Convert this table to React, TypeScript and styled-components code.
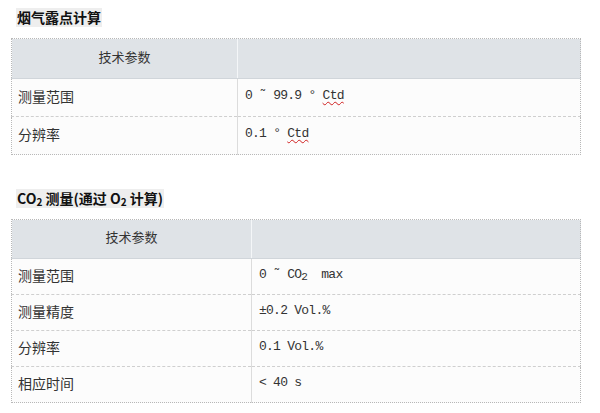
import React from "react";
import styled, { createGlobalStyle } from "styled-components";

const Global = createGlobalStyle`
  html, body { margin: 0; padding: 0; background: #ffffff; }
  body { font-family: "Noto Sans CJK SC", "Noto Sans", sans-serif; color: #333; line-height: 16px; }
`;

const Page = styled.div`
  padding: 8px 0 0 11px;
  width: 570px;
`;

const Section = styled.section<{ $gap?: number }>`
  margin-top: ${(p) => p.$gap ?? 0}px;
`;

const Title = styled.h3`
  display: block;
  width: fit-content;
  margin: 0 0 11px 5px;
  padding: 0 1px;
  height: 19px;
  line-height: 19px;
  font-size: 14px;
  font-weight: 700;
  color: #111;
  background: #eeeeee;
  font-family: "Noto Sans CJK SC", sans-serif;
  sub {
    font-size: 10px;
    line-height: 10px;
    vertical-align: baseline;
    position: relative;
    top: 2px;
  }
`;

const Table = styled.table`
  width: 570px;
  border-collapse: collapse;
  table-layout: fixed;
  border: 1px dotted #b8b8b8;
`;

const HeadRow = styled.tr<{ $h: number }>`
  height: ${(p) => p.$h}px;
`;

const HeadCell = styled.th<{ $w?: number }>`
  width: ${(p) => (p.$w ? `${p.$w}px` : "auto")};
  padding: 0 0 4px 0;
  background: #dfe3e7;
  border-right: 1px solid #f4f6f8;
  border-bottom: 1px solid #d0d5da;
  font-weight: 400;
  font-size: 13px;
  line-height: 16px;
  color: #333;
  text-align: center;
  vertical-align: middle;
  &:last-child { border-right: none; }
`;

const Row = styled.tr<{ $h: number }>`
  height: ${(p) => p.$h}px;
  background: #fcfcfc;
  & + & td { border-top: 1px dashed #cfcfcf; }
`;

const Label = styled.td`
  padding: 0 0 3px 6px;
  font-size: 14px;
  line-height: 16px;
  color: #333;
  border-right: 1px solid #dcdcdc;
  vertical-align: middle;
`;

const Value = styled.td<{ $pad: number }>`
  padding: 0 0 3px ${(p) => p.$pad}px;
  font-family: "Liberation Mono", "Noto Sans CJK SC", monospace;
  font-size: 13px;
  line-height: 16px;
  letter-spacing: -0.75px;
  color: #333;
  vertical-align: middle;
  white-space: pre;
  sub {
    font-size: 11px;
    line-height: 10px;
    vertical-align: baseline;
    position: relative;
    top: 2px;
  }
`;

const Spell = styled.span`
  text-decoration: underline wavy #d02020;
  text-decoration-thickness: 1px;
  text-underline-offset: 2px;
`;

type SpecRow = { label: string; value: React.ReactNode };

function SpecTable(props: {
  firstCol: number;
  headH: number;
  rowH: number;
  pad: number;
  rows: SpecRow[];
}) {
  return (
    <Table>
      <thead>
        <HeadRow $h={props.headH}>
          <HeadCell $w={props.firstCol}>技术参数</HeadCell>
          <HeadCell />
        </HeadRow>
      </thead>
      <tbody>
        {props.rows.map((r) => (
          <Row key={r.label} $h={props.rowH}>
            <Label>{r.label}</Label>
            <Value $pad={props.pad}>{r.value}</Value>
          </Row>
        ))}
      </tbody>
    </Table>
  );
}

export default function App() {
  return (
    <>
      <Global />
      <Page>
        <Section>
          <Title>烟气露点计算</Title>
          <SpecTable
            firstCol={225}
            headH={40}
            rowH={38}
            pad={7}
            rows={[
              {
                label: "测量范围",
                value: (
                  <>
                    0 ˜ 99.9 ° <Spell>Ctd</Spell>
                  </>
                ),
              },
              {
                label: "分辨率",
                value: (
                  <>
                    0.1 ° <Spell>Ctd</Spell>
                  </>
                ),
              },
            ]}
          />
        </Section>
        <Section $gap={34}>
          <Title>
            CO<sub>2</sub> 测量(通过 O<sub>2</sub> 计算)
          </Title>
          <SpecTable
            firstCol={239}
            headH={39}
            rowH={36}
            pad={7}
            rows={[
              {
                label: "测量范围",
                value: (
                  <>
                    0 ˜ CO<sub>2</sub>  max
                  </>
                ),
              },
              { label: "测量精度", value: "±0.2 Vol.%" },
              { label: "分辨率", value: "0.1 Vol.%" },
              { label: "相应时间", value: "< 40 s" },
            ]}
          />
        </Section>
      </Page>
    </>
  );
}
